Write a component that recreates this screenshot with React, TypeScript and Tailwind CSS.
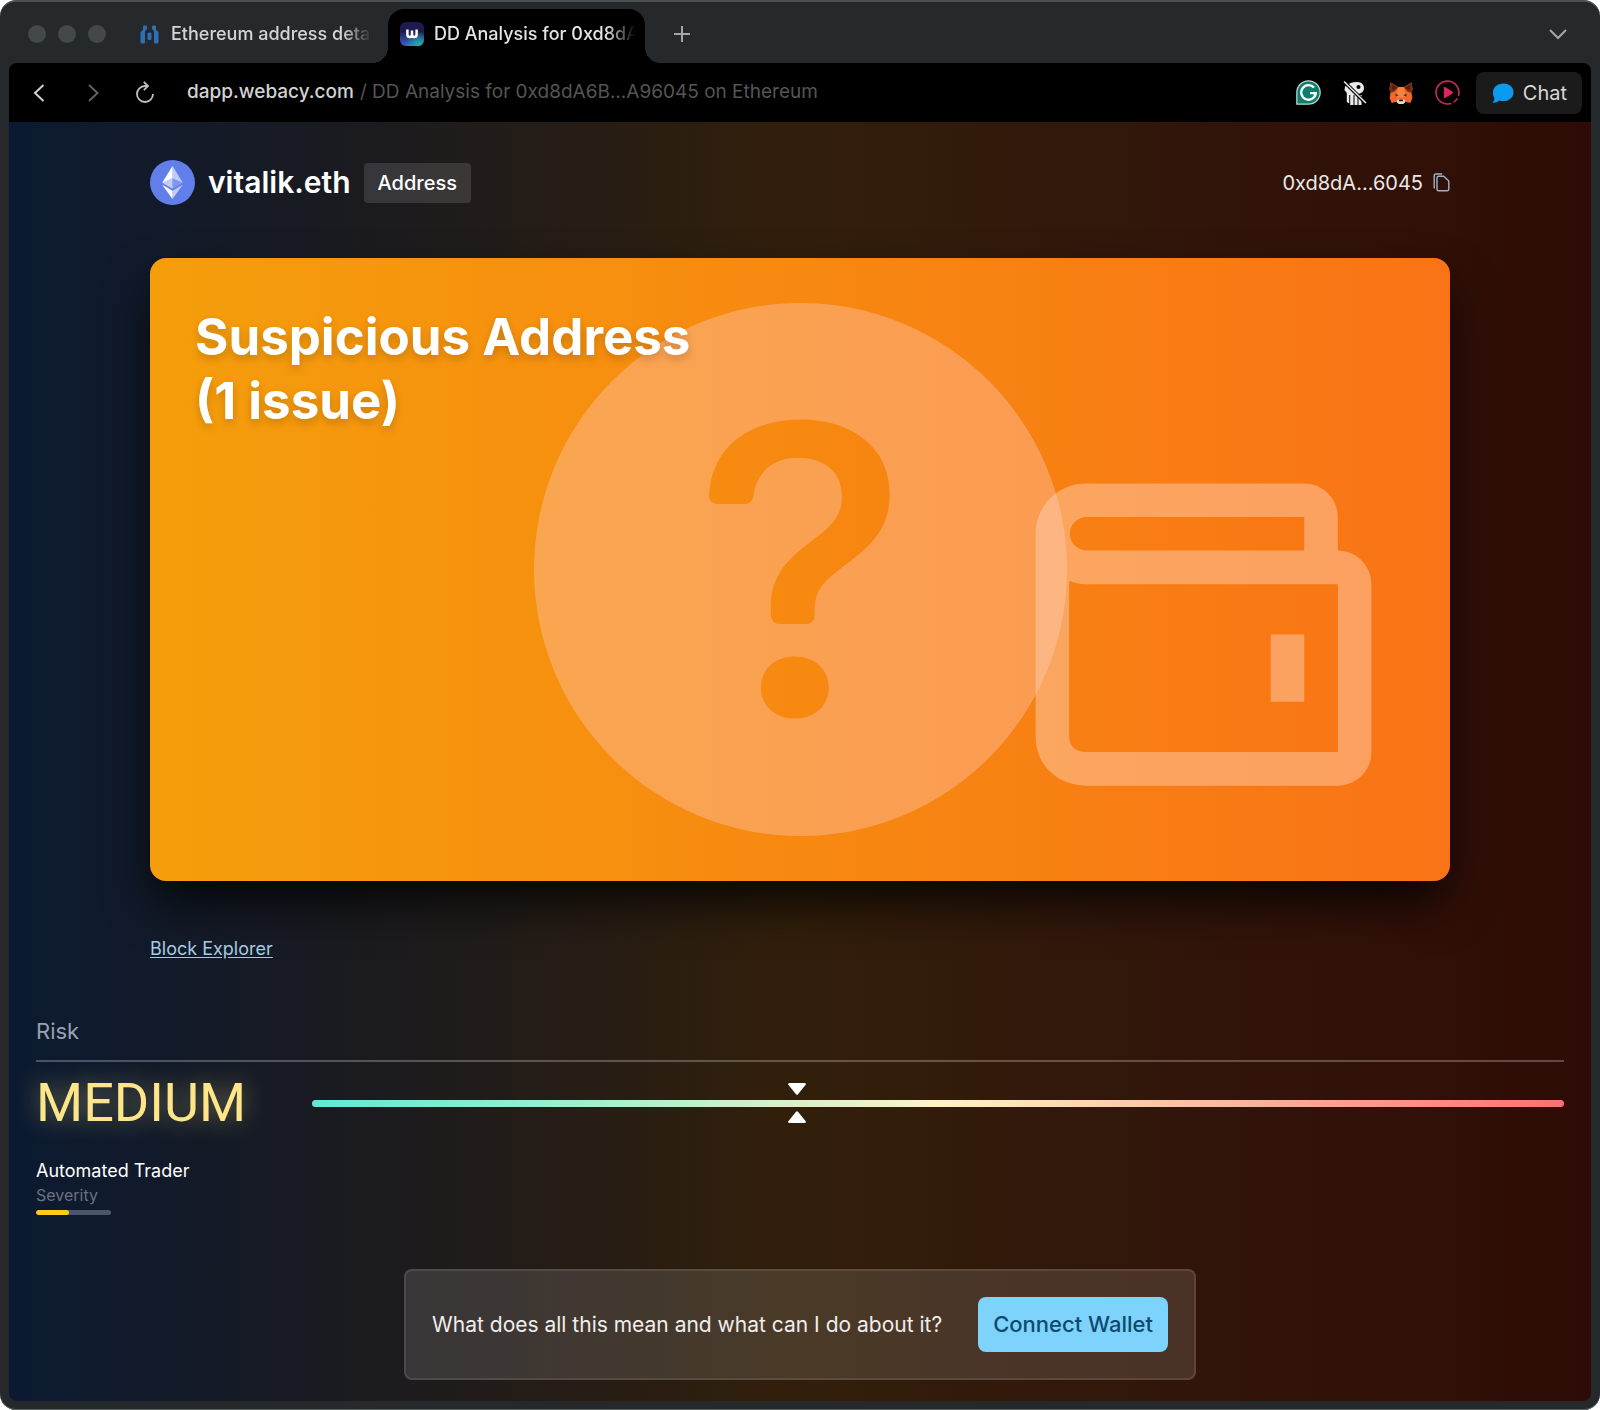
import type { ReactNode } from "react"
import { BsQuestionCircleFill } from "react-icons/bs"
import { BiWallet } from "react-icons/bi"

interface TabProps {
  title: string
  icon: ReactNode
  active?: boolean
}

const RISK_POSITION = 38.7
const SEVERITY = 44

function ExplorerIcon() {
  return (
    <svg viewBox="0 0 19 19" className="size-[19px] shrink-0" fill="#2f6fb5" aria-hidden="true">
      <path d="M.5 7L3 5V1.500Q3 .5 4 .5h2Q7 .5 7 1.500v2Q7 5 5.500 5.500L5 6.500V17q0 1.500-1.500 1.500H2Q.5 18.500.5 17z" />
      <path d="M18.500 7L16 5V1.500Q16 .5 15 .5h-2q-1 0-1 1v2q0 1.500 1.500 2l.5 1V17q0 1.500 1.500 1.500H17q1.500 0 1.500-1.500z" />
      <rect x="7.500" y="7.500" width="4" height="7.500" rx="1.500" />
    </svg>
  )
}

function WebacyIcon() {
  return (
    <svg viewBox="0 0 24 24" className="size-6 shrink-0" aria-hidden="true">
      <defs>
        <linearGradient id="webacy-base" x1="0" y1="0" x2="0" y2="1">
          <stop offset="0.4" stopColor="#1d1b4f" />
          <stop offset="1" stopColor="#3d63c8" />
        </linearGradient>
        <radialGradient id="webacy-glow" cx="0.8" cy="1" r="0.6">
          <stop offset="0" stopColor="#1fb5a5" />
          <stop offset="1" stopColor="#1fb5a5" stopOpacity="0" />
        </radialGradient>
      </defs>
      <rect width="24" height="24" rx="6" fill="url(#webacy-base)" />
      <rect width="24" height="24" rx="6" fill="url(#webacy-glow)" />
      <path d="M7.4 7.500v5.200a2.300 2.300 0 0 0 4.600 0V8.500M12 12.700a2.300 2.300 0 0 0 4.600 0V7.500" fill="none" stroke="#fff" strokeWidth="2.500" />
    </svg>
  )
}

function GrammarlyIcon() {
  return (
    <svg viewBox="0 0 24 24" className="size-[25px]" aria-hidden="true">
      <path d="M12 .8A11.200 11.200 0 1 1 12 23.200H.8V12A11.200 11.200 0 0 1 12 .8z" fill="#0d7f6c" stroke="#c3d6d2" strokeWidth="1.200" />
      <path d="M17.300 7.300A7 7 0 1 0 19 12.600H13.500M18.800 12.600l-1.300 3.800" fill="none" stroke="#fff" strokeWidth="2.200" />
    </svg>
  )
}

function PocketIcon() {
  return (
    <svg viewBox="0 0 24 24" className="size-6" aria-hidden="true">
      <g fill="#e9e9e9">
        <path d="M2 5.500C6 2 10 .8 14.500 1c4 .2 6.500 2.700 6.500 6s-2.600 5.800-6 5.800l-.5 1.200V24h-3V14h-1v10H7.200V14h-1v8.500L3.800 21V12L1.500 9z" />
        <path d="M15.500 14h3v10h-3z" />
      </g>
      <circle cx="15.500" cy="6" r="2" fill="#000" />
      <path d="M1 .5l21.500 21.500" stroke="#000" strokeWidth="3.600" />
      <path d="M1 .5l22 21.500" stroke="#e9e9e9" strokeWidth="1.500" />
    </svg>
  )
}

function FoxIcon() {
  return (
    <svg viewBox="0 0 24 24" className="size-6" aria-hidden="true">
      <path d="M1.500 1.500L9.300 6h5.400l7.800-4.500 1 6.500-1 4 .9 5-2 5-5-1.200-2.400 2.200h-4l-2.400-2.200-5 1.200-2-5 .9-5-1-4z" fill="#f0692b" />
      <path d="M1.500 1.500L9.300 6.300 5.500 10.500l-4 1.500-1-4zM22.500 1.500L14.700 6.300l3.800 4.200 4 1.500 1-4z" fill="#7d2d14" />
      <path d="M3 3.500l4.500 3.300-3.800 2.700zM21 3.500l-4.500 3.300 3.800 2.700z" fill="#4b1c0f" />
      <path d="M9.300 6h5.400l1.300 6 .5 4.500h-9L8 12z" fill="#f9843c" />
      <path d="M6.300 12.800l3.500 1.400-3 1.400zM17.700 12.800l-3.500 1.400 3 1.400z" fill="#233447" />
      <path d="M8.500 18.500h7l.7 2.500-2.200 2h-4l-2.200-2z" fill="#e9dcd2" />
      <path d="M10.300 18.500h3.400l.4 1.800H9.900z" fill="#161616" />
    </svg>
  )
}

function RecorderIcon() {
  return (
    <svg viewBox="0 0 24 24" className="size-[25px]" fill="none" stroke="#c42a55" strokeWidth="1.600" strokeLinecap="round" aria-hidden="true">
      <path d="M15 22.600A11 11 0 1 1 22.700 14.500M18.500 20.800a11 11 0 0 0 2.600-2.700" />
      <path d="M8.500 7.500q0-1.300 1.200-.7l7 4.300q1.200.9 0 1.800l-7 4.300q-1.200.6-1.200-.7z" fill="#e0265a" stroke="none" />
    </svg>
  )
}

function EthereumIcon() {
  return (
    <svg viewBox="0 0 45 45" className="size-[45px]" aria-hidden="true">
      <circle cx="22.500" cy="22.500" r="22.500" fill="#627eea" />
      <g fill="#fff">
        <path d="M22.500 6v12.300l10.300 4.500z" fillOpacity=".6" />
        <path d="M22.500 6L12.200 22.800l10.300-4.500z" />
        <path d="M22.500 30.700V39l10.300-14.300z" fillOpacity=".6" />
        <path d="M22.500 39v-8.300l-10.300-6z" />
        <path d="M22.500 28.800l10.300-6-10.300-4.500z" fillOpacity=".2" />
        <path d="M12.200 22.800l10.300 6V18.300z" fillOpacity=".6" />
      </g>
    </svg>
  )
}

function CopyIcon() {
  return (
    <svg viewBox="0 0 17 19" className="h-[19px] w-[17px]" fill="none" stroke="currentColor" strokeWidth="1.400" strokeLinejoin="round" aria-hidden="true">
      <path d="M5.500 3.200h5.200L15.800 8v8.300a1.500 1.500 0 0 1-1.500 1.500H5.500A1.500 1.500 0 0 1 4 16.300V4.700a1.500 1.500 0 0 1 1.500-1.500z" />
      <path d="M1.200 15.500V2.700A1.700 1.700 0 0 1 2.900 1h6.300" />
    </svg>
  )
}

function Tab({ title, icon, active }: TabProps) {
  return (
    <button
      type="button"
      role="tab"
      aria-selected={Boolean(active)}
      className={
        active
          ? "relative flex h-[54px] w-[257px] items-center gap-2.5 rounded-t-2xl bg-black pr-3 pb-1 pl-3 text-[#e4e4e4]"
          : "flex h-[54px] w-[248px] items-center gap-3 pr-3 pb-1 text-[#d3d6d7]"
      }
    >
      {icon}
      <span className="flex-1 text-left text-lg font-medium whitespace-nowrap [mask-image:linear-gradient(to_right,#000_84%,transparent_98%)]">
        {title}
      </span>
      {/* Curved feet joining the tab to the toolbar */}
      {active && (
        <>
          <span className="absolute bottom-0 -left-4 size-4 bg-[radial-gradient(circle_at_0_0,transparent_16px,#000_16px)]" />
          <span className="absolute -right-4 bottom-0 size-4 bg-[radial-gradient(circle_at_100%_0,transparent_16px,#000_16px)]" />
        </>
      )}
    </button>
  )
}

function TabBar() {
  return (
    <div className="flex h-[61px] items-end">
      <div className="mb-5 flex w-[131px] gap-3 pl-[19px]">
        <span className="size-[18px] rounded-full bg-[#43484a]" />
        <span className="size-[18px] rounded-full bg-[#43484a]" />
        <span className="size-[18px] rounded-full bg-[#43484a]" />
      </div>
      <div role="tablist" className="flex">
        <Tab title="Ethereum address deta" icon={<ExplorerIcon />} />
        <Tab title="DD Analysis for 0xd8dA" icon={<WebacyIcon />} active />
      </div>
      <button type="button" aria-label="New tab" className="mb-5 ml-7 text-[#a3a7a8]">
        <svg viewBox="0 0 18 18" className="size-[18px]" stroke="currentColor" strokeWidth="2">
          <path d="M9 1v16M1 9h16" />
        </svg>
      </button>
      <button type="button" aria-label="Search tabs" className="mr-6 mb-5 ml-auto text-[#a3a7a8]">
        <svg viewBox="0 0 18 18" className="size-[18px]" fill="none" stroke="currentColor" strokeWidth="2">
          <path d="M1 5l8 8 8-8" />
        </svg>
      </button>
    </div>
  )
}

function Toolbar() {
  return (
    <div className="flex h-[59px] items-center rounded-t-lg bg-black pr-[9px] pl-[22px]">
      <div className="flex gap-[26px]">
        <button type="button" aria-label="Back" className="text-[#d0d0d0]">
          <svg viewBox="0 0 26 26" className="size-[26px]" fill="none" stroke="currentColor" strokeWidth="2">
            <path d="M12.500 5L4 13l8.500 8" />
          </svg>
        </button>
        <button type="button" aria-label="Forward" className="text-[#626262]">
          <svg viewBox="0 0 26 26" className="size-[26px]" fill="none" stroke="currentColor" strokeWidth="2">
            <path d="M6 5l8.500 8L6 21" />
          </svg>
        </button>
        <button type="button" aria-label="Reload" className="text-[#c0c0c0]">
          <svg viewBox="0 0 26 26" className="size-[26px]" fill="none" stroke="currentColor" strokeWidth="1.800">
            <path d="M12.500 6H10a8 8 0 1 0 8 8" />
            <path d="M8.800 1.800L13 6l-4.200 4.200" />
          </svg>
        </button>
      </div>
      <button type="button" aria-label="Address" className="ml-[26px] flex gap-1.5 text-[19px]">
        <span className="font-medium text-[#d2d2d2]">dapp.webacy.com</span>
        <span className="text-[#555]">/ DD Analysis for 0xd8dA6B...A96045 on Ethereum</span>
      </button>
      <div className="ml-auto flex items-center gap-[22px]">
        <button type="button" aria-label="Grammarly"><GrammarlyIcon /></button>
        <button type="button" aria-label="Pocket"><PocketIcon /></button>
        <button type="button" aria-label="MetaMask"><FoxIcon /></button>
        <button type="button" aria-label="Recorder"><RecorderIcon /></button>
      </div>
      <button type="button" className="ml-4 flex h-[42px] items-center gap-2 rounded-lg bg-[#1b1b1b] px-[15px] text-xl text-[#d8d8d8]">
        <svg viewBox="0 0 24 22" className="h-[22px] w-6" fill="#0a9af0" aria-hidden="true">
          <path d="M12.500 1.500c6 0 10 3.700 10 8.800s-4 8.800-10 8.800c-1.600 0-3-.2-4.200-.7C6.500 20 4 20.800 1.500 20.600c1.200-1.200 1.900-2.700 1.900-4.300A8.500 8.500 0 0 1 2 10.300c0-5.100 4.500-8.800 10.500-8.800z" />
        </svg>
        Chat
      </button>
    </div>
  )
}

function VerdictCard() {
  return (
    <section className="grid rounded-2xl bg-linear-to-r/srgb from-[#f59e0b] to-[#f97316] p-[45px] shadow-[0_25px_50px_-6px_rgba(0,0,0,0.85)]">
      <BsQuestionCircleFill aria-hidden="true" className="col-start-1 row-start-1 size-[533px] justify-self-center text-[#fec6b4]/40" />
      <BiWallet aria-hidden="true" className="col-start-1 row-start-1 size-[403px] self-end justify-self-end text-[#fed4bc]/45" />
      <h2 className="col-start-1 row-start-1 pt-0.5 text-[51px] leading-[64px] font-bold text-white [text-shadow:0_4px_8px_rgba(0,0,0,0.18)]">
        Suspicious Address
        <br />
        (1 issue)
      </h2>
    </section>
  )
}

function RiskSection() {
  return (
    <section className="mt-[53px] px-[27px]">
      <h3 className="border-b-2 border-white/25 pb-3.5 text-[22px] leading-[30px] text-gray-400">Risk</h3>
      <div className="mt-[11px] flex items-center">
        <p className="w-[276px] font-['Roboto','Inter',sans-serif] text-[54px] leading-[60px] text-[#fde68a] [text-shadow:0_0_24px_rgba(253,230,138,0.45)]">
          MEDIUM
        </p>
        <div
          role="meter"
          aria-label="Risk"
          aria-valuenow={RISK_POSITION}
          aria-valuemin={0}
          aria-valuemax={100}
          className="relative h-[7px] flex-1 rounded-full bg-linear-to-r/srgb from-[#5eead4] via-[#fef3c7] to-[#f87171]"
        >
          <div
            className="absolute top-1/2 flex -translate-x-1/2 -translate-y-1/2 flex-col gap-4 text-white"
            style={{ left: `${RISK_POSITION}%` }}
          >
            <svg viewBox="0 0 18 12" className="h-3 w-[18px]" fill="currentColor">
              <path d="M1 0h16q1.500.5.5 2L10 11.300q-1 1-2 0L.5 2Q-.5.500 1 0z" />
            </svg>
            <svg viewBox="0 0 18 12" className="h-3 w-[18px]" fill="currentColor">
              <path d="M1 12h16q1.500-.5.5-2L10 .7q-1-1-2 0L.5 10Q-.5 11.500 1 12z" />
            </svg>
          </div>
        </div>
      </div>
      <p className="mt-6 text-lg leading-7 text-white">Automated Trader</p>
      <p className="text-base leading-5 text-gray-500">Severity</p>
      <div className="mt-[5px] h-[5px] w-[75px] overflow-hidden rounded-full bg-gray-600">
        <div className="h-full rounded-full bg-[#facc15]" style={{ width: `${SEVERITY}%` }} />
      </div>
    </section>
  )
}

export default function App() {
  return (
    <div className="flex min-h-screen flex-col rounded-2xl border-t-2 border-[#4a5052] bg-[#25292b] px-[9px] pb-[9px] font-['Inter','Liberation_Sans',sans-serif] shadow-[inset_0_-1px_0_#5b6062]">
      <TabBar />
      <Toolbar />
      <main className="flex-1 rounded-b-lg bg-[linear-gradient(to_right,#0b1a31_0%,#1c1b1e_24%,#321f0a_50%,#32180b_66%,#300f07_92%,#2e0b06_100%)] pb-5">
        <div className="mx-auto max-w-[1300px]">
          <header className="flex items-center pt-[38px]">
            <EthereumIcon />
            <h1 className="ml-[13px] text-[30px] font-semibold text-white">vitalik.eth</h1>
            <span className="ml-[13px] rounded-sm bg-white/12 px-3.5 py-1.5 text-xl font-medium text-white">Address</span>
            <span className="ml-auto text-xl text-[#ece8e6]">0xd8dA...6045</span>
            <button type="button" aria-label="Copy address" className="ml-2.5 text-[#9db4c8]">
              <CopyIcon />
            </button>
          </header>
          <div className="mt-[53px]">
            <VerdictCard />
          </div>
          <a href="#explorer" className="mt-[54px] inline-block text-lg leading-7 text-[#a5cbe0] underline underline-offset-2">
            Block Explorer
          </a>
        </div>
        <RiskSection />
        <div className="mx-auto mt-[54px] flex w-fit items-center gap-9 rounded-lg border-2 border-white/10 bg-white/12 p-[26px]">
          <p className="text-[21px] text-[#f1eeec]">What does all this mean and what can I do about it?</p>
          <button type="button" className="h-[55px] rounded-lg bg-[#7dd3fc] px-[15px] text-[22px] font-medium text-[#0c4a6e]">
            Connect Wallet
          </button>
        </div>
      </main>
    </div>
  )
}
